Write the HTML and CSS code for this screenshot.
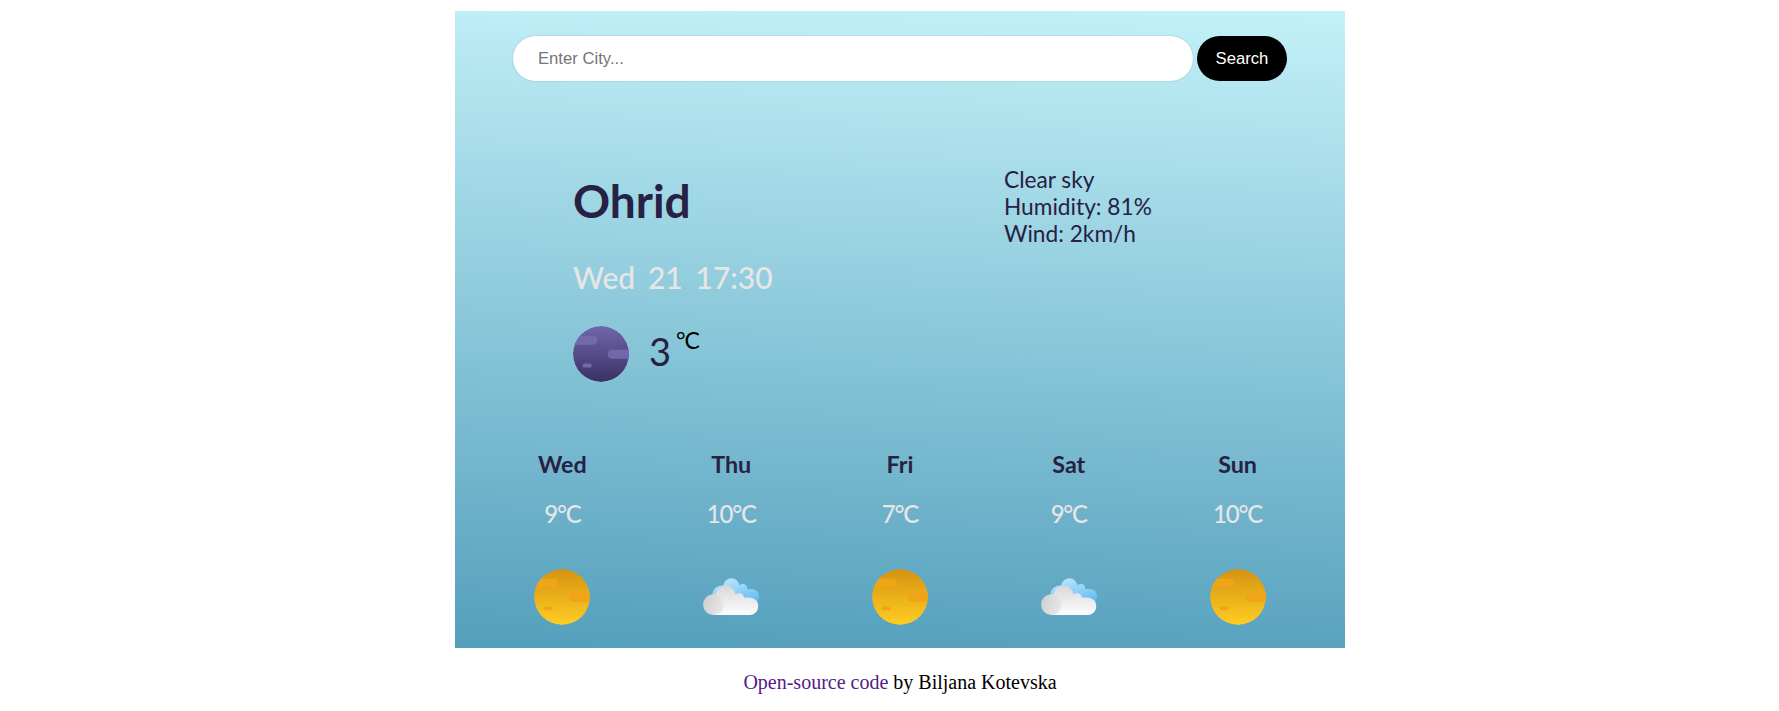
FILE: index.html
```
<!DOCTYPE html>
<html lang="en">
<head>
<meta charset="utf-8">
<title>Weather</title>
<link rel="stylesheet" href="styles.css">
</head>
<body>
<svg class="sprite" width="0" height="0" aria-hidden="true">
  <defs>
    <linearGradient id="sunFill" x1="0" y1="0" x2="0" y2="1"><stop offset="0" stop-color="#d59310"/><stop offset="1" stop-color="#ffcd24"/></linearGradient>
    <linearGradient id="moonFill" x1="0" y1="0" x2="0" y2="1"><stop offset="0" stop-color="#7067aa"/><stop offset="1" stop-color="#3b3064"/></linearGradient>
    <linearGradient id="blueFill" x1="0" y1="0" x2="0.5" y2="1"><stop offset="0" stop-color="#c9eaff"/><stop offset="1" stop-color="#69bff5"/></linearGradient>
    <linearGradient id="greyFill" x1="0" y1="0" x2="0" y2="1"><stop offset="0" stop-color="#d9d9da"/><stop offset="1" stop-color="#fdfdfd"/></linearGradient>
    <linearGradient id="puffFill" x1="0" y1="0.3" x2="1" y2="0.65"><stop offset="0" stop-color="#cfcfd0"/><stop offset="1" stop-color="#e9e9ea"/></linearGradient>
    <clipPath id="disc"><circle cx="28" cy="28" r="28"/></clipPath>
    <symbol id="sun" viewBox="0 0 56 56">
      <g clip-path="url(#disc)"><circle cx="28" cy="28" r="28" fill="url(#sunFill)"/>
      <g fill="#f0a418"><rect x="-6" y="9.7" width="30.5" height="9" rx="4.5"/><rect x="35" y="23.5" width="28" height="9.3" rx="4.6"/><rect x="9.5" y="37.6" width="9.2" height="3.6" rx="1.8"/></g></g>
    </symbol>
    <symbol id="moon" viewBox="0 0 56 56">
      <g clip-path="url(#disc)"><circle cx="28" cy="28" r="28" fill="url(#moonFill)"/>
      <g fill="#7368ab"><rect x="-6" y="9.7" width="30.5" height="9" rx="4.5"/><rect x="34.6" y="23.7" width="28" height="9" rx="4.5"/><rect x="9.5" y="37.6" width="9.2" height="4" rx="1.9"/></g></g>
    </symbol>
    <symbol id="cloud" viewBox="0 0 56 56">
      <path fill="url(#blueFill)" d="M9.500 27.500A9.500 9.500 0 0 1 20.200 16.600A8.200 8.200 0 0 1 36.500 16.600A4.400 4.400 0 0 1 44.300 19.900H49A7 7 0 0 1 56 27C56 31 54.500 33 52 35H12Z"/>
      <path fill="url(#greyFill)" d="M10.700 25.300H12.800A10 10 0 0 1 32.600 25.600A4.900 4.900 0 0 1 41 28.400H46.500A8.800 8.800 0 0 1 46.500 46H10.700Z"/>
      <path fill="url(#puffFill)" d="M10.500 46A10.350 10.350 0 1 1 20.800 35.600C20.800 41.500 17 46 10.500 46Z"/>
    </symbol>
  </defs>
</svg>
<main class="card">
  <form class="search">
    <input class="search-input" type="text" placeholder="Enter City...">
    <button class="search-button" type="button">Search</button>
  </form>
  <section class="current">
    <div class="place">
      <h1 class="city">Ohrid</h1>
      <div class="date">Wed&nbsp; 21&nbsp; 17:30</div>
      <div class="now">
        <svg class="icon"><use href="#moon"/></svg>
        <span class="degrees">3</span>
        <span class="unit">°C</span>
      </div>
    </div>
    <div class="details">
      <div>Clear sky</div>
      <div>Humidity: 81%</div>
      <div>Wind: 2km/h</div>
    </div>
  </section>
  <section class="forecast">
    <div class="day"><div class="name">Wed</div><div class="temp">9°C</div><svg class="icon"><use href="#sun"/></svg></div>
    <div class="day"><div class="name">Thu</div><div class="temp">10°C</div><svg class="icon"><use href="#cloud"/></svg></div>
    <div class="day"><div class="name">Fri</div><div class="temp">7°C</div><svg class="icon"><use href="#sun"/></svg></div>
    <div class="day"><div class="name">Sat</div><div class="temp">9°C</div><svg class="icon"><use href="#cloud"/></svg></div>
    <div class="day"><div class="name">Sun</div><div class="temp">10°C</div><svg class="icon"><use href="#sun"/></svg></div>
  </section>
</main>
<footer class="credit"><a class="credit-link" href="#">Open-source code</a> by Biljana Kotevska</footer>
</body>
</html>
```
FILE: styles.css
```
* { box-sizing: border-box; }
body { margin: 0; padding: 11px 0 0 21px; background: #fff; }
.sprite { display: block; }
.card {
  width: 890px;
  height: 637px;
  margin: 0 auto;
  padding: 25px 23px 0;
  font-family: Lato, sans-serif;
  color: #272144;
  background: linear-gradient(182deg, #c3f1f8 0%, #549fbc 100%);
}
.search { display: flex; gap: 4px; margin: 0 35px; }
.search-input, .search-button {
  height: 45px;
  border: 0;
  border-radius: 23px;
  font: 16.67px "Liberation Sans", Arial, sans-serif;
}
.search-input { width: 680px; padding: 0 25px; background: #fff; box-shadow: 0 0 2px rgba(0, 0, 0, .2); }
.search-input::placeholder { color: #757575; }
.search-button { width: 90px; padding: 0; background: #000; color: #fff; }
.current { display: flex; height: 356px; padding: 85px 0 0 95px; }
.place { width: 431px; }
.city { margin: 7px 0 0; font-size: 46px; line-height: 56px; font-weight: 700; }
.date { margin-top: 30px; font-size: 30px; line-height: 36px; font-weight: 500; word-spacing: -1.2px; color: #e6e6e6; }
.now { display: flex; margin-top: 31px; }
.icon { display: block; width: 56px; height: 56px; }
.degrees { margin-left: 20px; font-size: 38px; line-height: 50px; }
.unit { margin: 1px 0 0 5px; font-size: 23px; line-height: 27px; letter-spacing: -1px; color: #000; }
.details { font-size: 22.7px; line-height: 27px; }
.forecast { display: grid; grid-template-columns: repeat(5, 1fr); text-align: center; padding-top: 14px; }
.name { font-size: 23.3px; line-height: 27px; font-weight: 700; }
.temp { margin: 22px 0 42px; font-size: 24px; line-height: 27px; font-weight: 500; letter-spacing: -1.2px; color: #e6e6e6; }
.day .icon { margin: 0 auto; }
.credit { margin-top: 21px; text-align: center; font: 20px/26px "Liberation Serif", "Times New Roman", serif; color: #000; }
.credit-link { color: #551a8b; text-decoration: none; }
```
